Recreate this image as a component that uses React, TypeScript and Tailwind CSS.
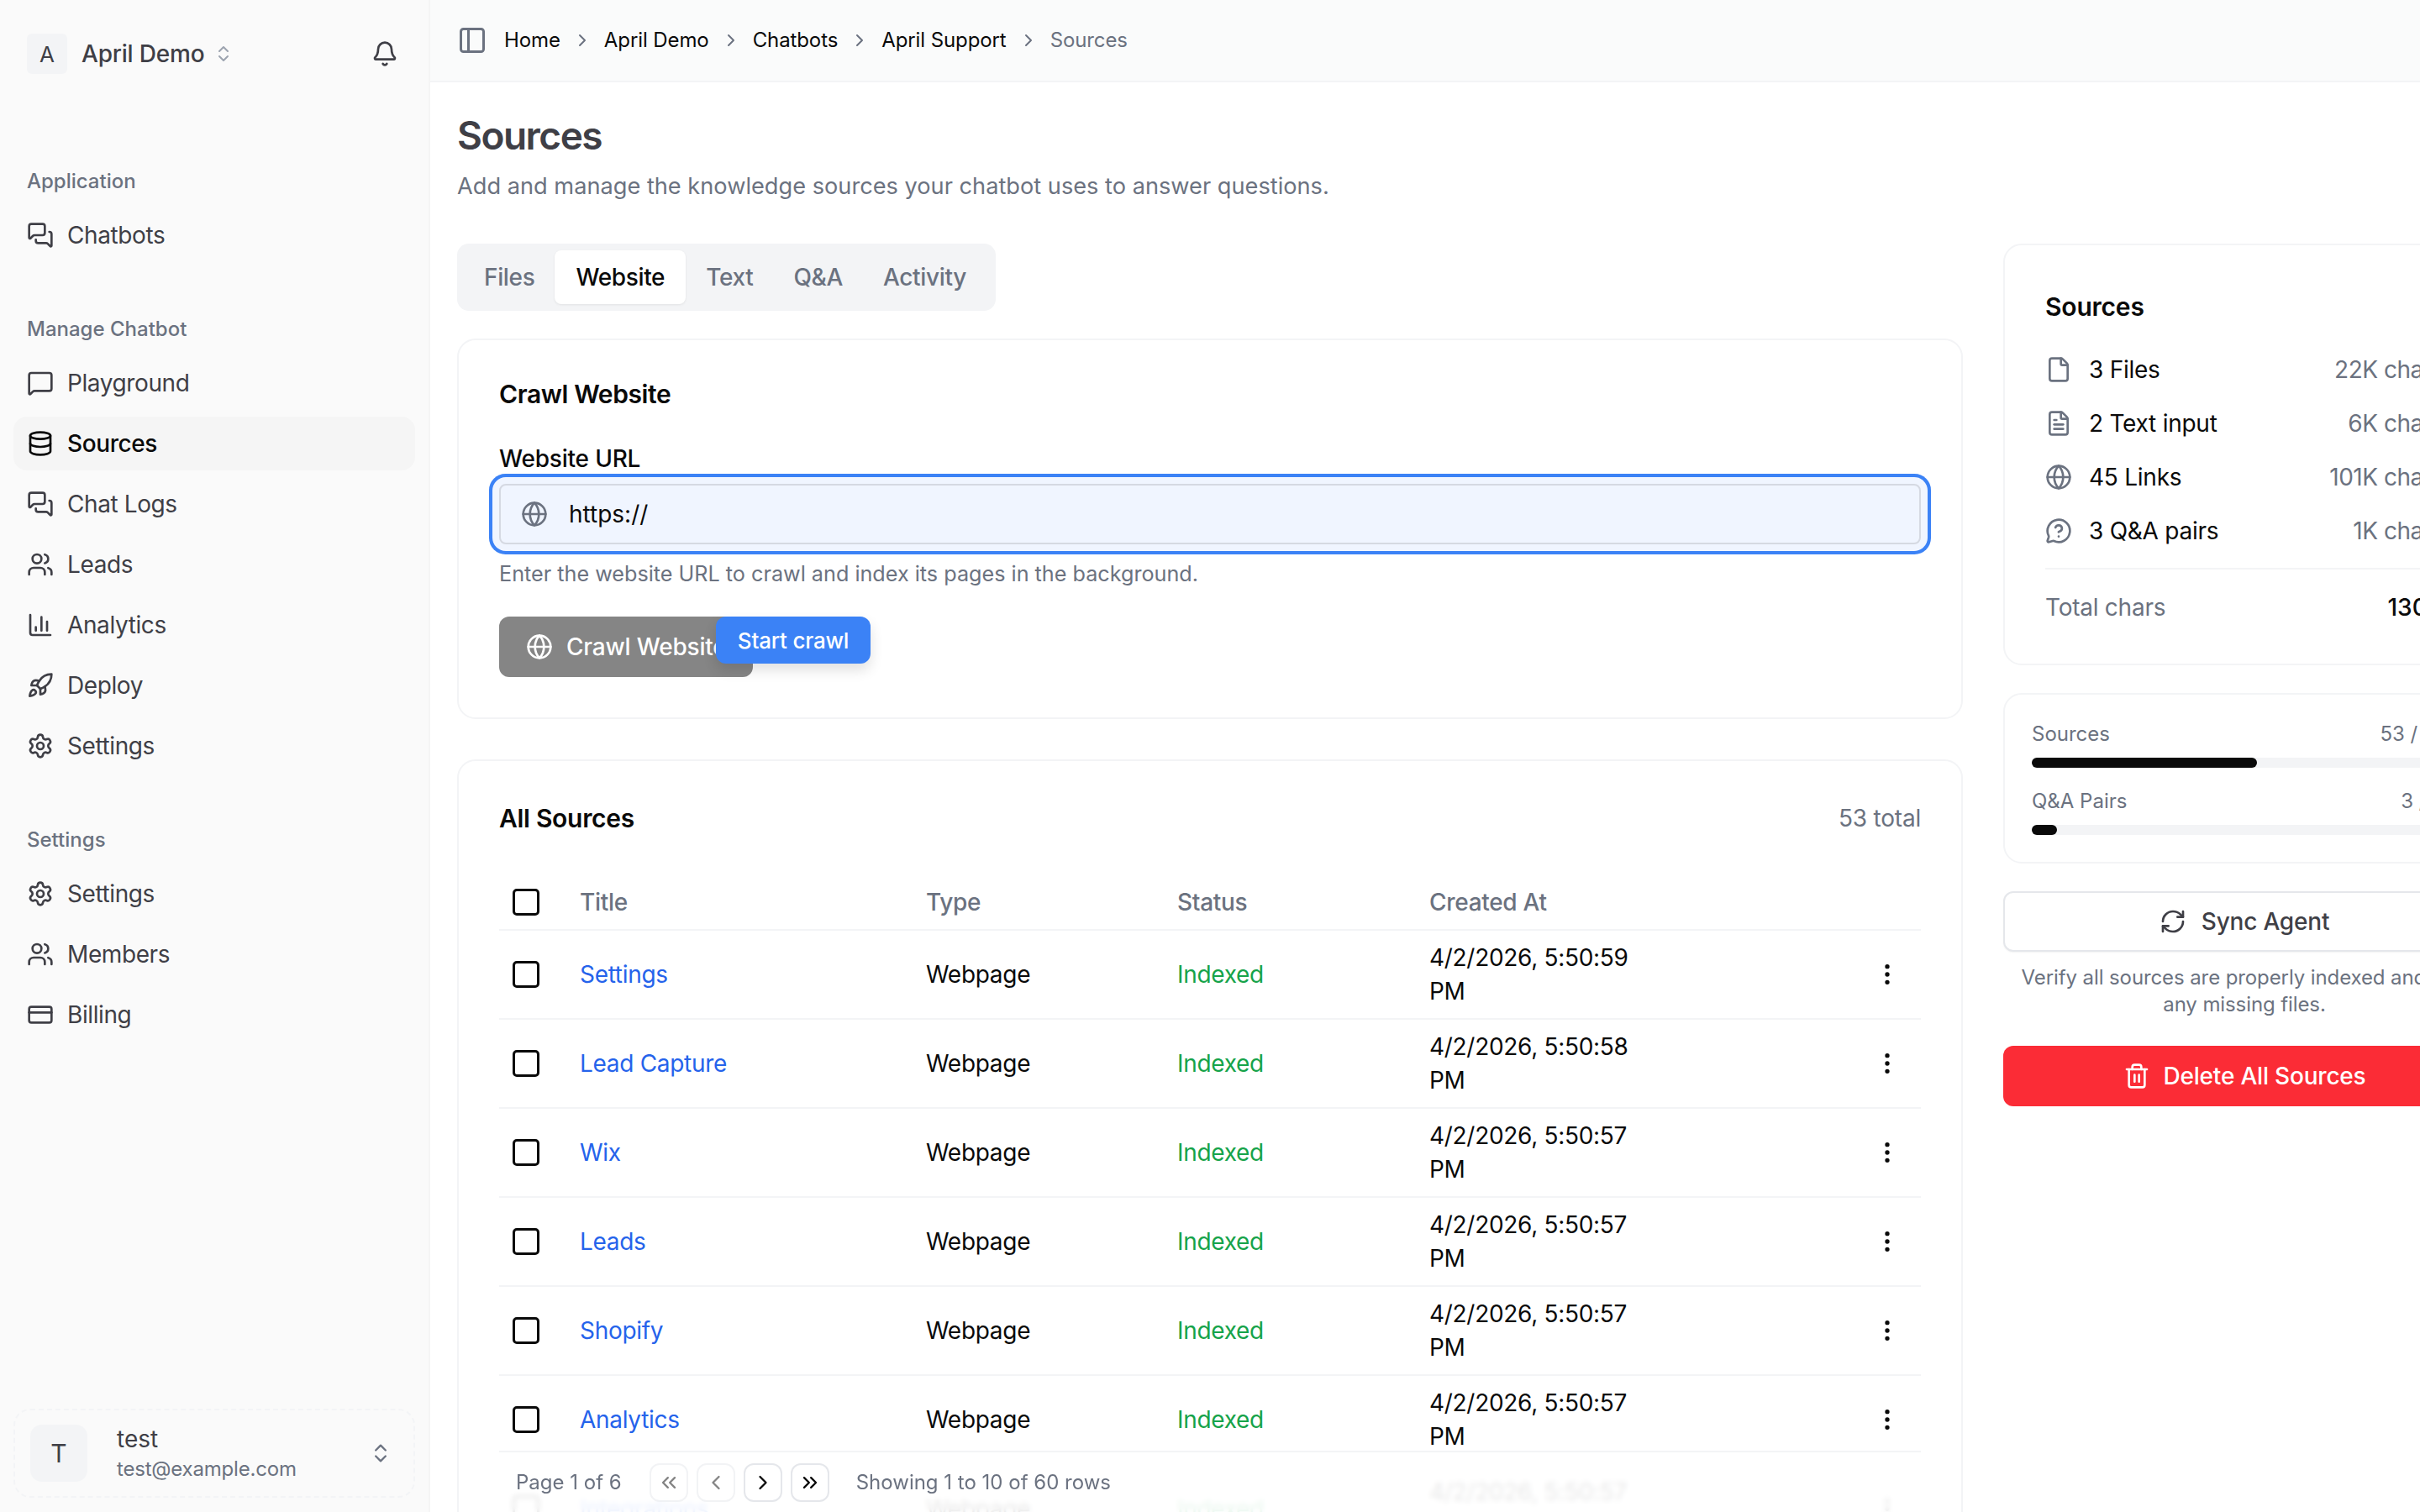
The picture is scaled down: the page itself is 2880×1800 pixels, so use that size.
import React from "react";
import {
  Bell, ChevronsUpDown, MessagesSquare, MessageSquare, Database, Users, ChartColumn, Rocket, Settings,
  CreditCard, PanelLeft, ChevronRight, ChevronLeft, ChevronsLeft, ChevronsRight, Globe, File, FileText,
  MessageCircleQuestionMark, RefreshCw, Trash2, EllipsisVertical,
} from "lucide-react";

const NavRow = ({ icon: Icon, label, active }: { icon: any; label: string; active?: boolean }) => (
  <div className={`flex h-16 items-center gap-4 rounded-[16px] px-4 text-[28px] tracking-[-0.4px] ${active ? "bg-[#f5f5f5] font-medium text-[#0a0a0a]" : "text-[#3f3f46]"}`}>
    <Icon size={32} strokeWidth={2} className="shrink-0" />
    <span>{label}</span>
  </div>
);

const Group = ({ title, children }: { title: string; children: React.ReactNode }) => (
  <div className="mb-12">
    <div className="flex h-16 items-center px-4 text-[24px] font-medium text-[#6b7280]">{title}</div>
    <div className="flex flex-col gap-2">{children}</div>
  </div>
);

const rows = [
  ["Settings", "5:50:59"],
  ["Lead Capture", "5:50:58"],
  ["Wix", "5:50:57"],
  ["Leads", "5:50:57"],
  ["Shopify", "5:50:57"],
  ["Analytics", "5:50:57"],
  ["Integrations", "5:50:57"],
  ["Customers", "5:50:56"],
  ["Pricing", "5:50:56"],
  ["Overview", "5:50:56"],
];

const Check = () => <div className="h-8 w-8 rounded-[5px] border-[3px] border-[#0a0a0a] bg-white" />;

const SourceStat = ({ icon: Icon, label, value }: { icon: any; label: string; value: string }) => (
  <div className="flex h-16 items-center justify-between">
    <div className="flex items-center gap-5 text-[#0a0a0a]">
      <Icon size={32} className="text-[#6b7280]" />
      <span className="tracking-[-0.25px]">{label}</span>
    </div>
    <span className="tracking-[-0.5px] text-[#6b7280]">{value}</span>
  </div>
);

const Crumb = ({ children }: { children: React.ReactNode }) => (
  <>
    <span className="tracking-[-0.1px] text-[#0a0a0a]">{children}</span>
    <ChevronRight size={24} strokeWidth={2} className="mx-[14px] text-[#6b7280]" />
  </>
);

const PageBtn = ({ icon: Icon, off }: { icon: any; off?: boolean }) => (
  <div className={`flex h-[46px] w-[46px] items-center justify-center rounded-[12px] border-2 border-[#e5e7eb] bg-white text-[#0a0a0a] ${off ? "opacity-50" : ""}`}>
    <Icon size={28} />
  </div>
);

export default function App() {
  return (
    <div className="flex h-[1800px] w-[2880px] overflow-hidden bg-white text-[#0a0a0a] [font-family:Inter,sans-serif]">
      <aside className="flex h-full w-[512px] shrink-0 flex-col border-r-2 border-[#f5f5f5] bg-[#fafafa]">
        <div className="mt-10 flex h-12 items-center justify-between px-8">
          <div className="flex items-center">
            <div className="flex h-12 w-12 items-center justify-center rounded-[6px] bg-[#f3f4f6] text-[26px] text-[#3f3f46]">A</div>
            <span className="ml-[17px] text-[28px] font-medium tracking-[-0.2px] text-[#3f3f46]">April Demo</span>
            <ChevronsUpDown size={24} className="ml-[11px] text-[#9ca3af]" />
          </div>
          <Bell size={32} className="mr-[4px] text-[#3f3f46]" />
        </div>
        <nav className="flex-1 px-4 pt-24">
          <Group title="Application">
            <NavRow icon={MessagesSquare} label="Chatbots" />
          </Group>
          <Group title="Manage Chatbot">
            <NavRow icon={MessageSquare} label="Playground" />
            <NavRow icon={Database} label="Sources" active />
            <NavRow icon={MessagesSquare} label="Chat Logs" />
            <NavRow icon={Users} label="Leads" />
            <NavRow icon={ChartColumn} label="Analytics" />
            <NavRow icon={Rocket} label="Deploy" />
            <NavRow icon={Settings} label="Settings" />
          </Group>
          <Group title="Settings">
            <NavRow icon={Settings} label="Settings" />
            <NavRow icon={Users} label="Members" />
            <NavRow icon={CreditCard} label="Billing" />
          </Group>
        </nav>
        <div className="mx-4 mb-[17px] flex h-[106px] items-center rounded-[20px] border-2 border-dashed border-[#f3f4f6] pl-[18px] pr-[25px]">
          <div className="flex h-[68px] w-[68px] items-center justify-center rounded-[14px] bg-[#f3f4f6] text-[30px] text-[#3f3f46]">T</div>
          <div className="ml-[35px] flex-1 leading-none">
            <div className="text-[28px] leading-[36px] text-[#3f3f46]">test</div>
            <div className="mt-[2px] text-[24px] leading-[32px] tracking-[-0.2px] text-[#6b7280]">test@example.com</div>
          </div>
          <ChevronsUpDown size={28} className="text-[#6b7280]" />
        </div>
      </aside>

      <div className="flex h-full min-w-0 flex-1 flex-col">
        <header className="flex h-[98px] shrink-0 items-center border-b-2 border-[#f3f4f6] bg-[#fafbfb] pl-[32px] text-[24px]">
          <PanelLeft size={36} className="mr-[20px] text-[#6b7280]" />
          <Crumb>Home</Crumb>
          <Crumb>April Demo</Crumb>
          <Crumb>Chatbots</Crumb>
          <Crumb>April Support</Crumb>
          <span className="tracking-[-0.1px] text-[#6b7280]">Sources</span>
        </header>
        <main className="min-h-0 flex-1 overflow-auto [scrollbar-width:none]">
          <div className="w-[2368px] pl-8">
            <h1 className="mt-[35px] h-14 text-[46px] font-semibold leading-[56px] tracking-[-1.5px] text-[#3f3f46]">Sources</h1>
            <p className="mt-[13px] text-[27.2px] leading-10 text-[#6b7280]">Add and manage the knowledge sources your chatbot uses to answer questions.</p>
            <div className="mt-[48px] flex items-start gap-12">
              <div className="w-[1792px] shrink-0">
                <div className="flex h-20 w-[641px] items-center rounded-[14px] bg-[#f3f4f6] p-2 text-[28px] font-medium tracking-[-0.35px] text-[#6b7280]">
                  <div className="px-6">Files</div>
                  <div className="flex h-16 items-center rounded-[8px] bg-white px-[25px] text-[#0a0a0a] shadow-[0_1px_3px_rgba(0,0,0,0.08)]">Website</div>
                  <div className="px-6">Text</div>
                  <div className="px-6">Q&amp;A</div>
                  <div className="px-6">Activity</div>
                </div>
                <section className="mt-[33px] h-[453px] rounded-[22px] border-2 border-[#f3f4f6] px-12">
                  <h2 className="mt-[44px] text-[30px] font-semibold leading-10 tracking-[-0.4px]">Crawl Website</h2>
                  <div className="mt-[38px] text-[28px] font-medium leading-[38px] tracking-[-0.2px]">Website URL</div>
                  <div className="mt-[11px] flex h-[72px] items-center rounded-[8px] border-2 border-[#d5d9e2] bg-[#f0f5ff] pl-6 text-[28px] shadow-[0_0_0_8px_#f0f5ff,0_0_0_12px_#3b82f6]">
                    <Globe size={32} className="text-[#6b7280]" />
                    <span className="ml-[25px]">https://</span>
                  </div>
                  <p className="mt-[17px] text-[25.2px] leading-9 text-[#6b7280]">Enter the website URL to crawl and index its pages in the background.</p>
                  <div className="relative mt-[33px] flex h-[72px] w-[302px] items-center rounded-[12px] bg-[#858585] pl-8 text-[28px] font-medium tracking-[-0.2px] text-white">
                    <Globe size={32} className="shrink-0" />
                    <span className="ml-[16px] whitespace-nowrap">Crawl Website</span>
                    <div className="absolute left-[258px] top-0 flex h-14 w-[184px] items-center justify-center rounded-[12px] bg-[#3b82f6] text-[26px] shadow-[0_8px_16px_rgba(0,0,0,0.12)]">Start crawl</div>
                  </div>
                </section>
                <section className="mt-12 rounded-[22px] border-2 border-[#f3f4f6] px-12">
                  <div className="mt-[48px] flex h-10 items-center justify-between">
                    <h2 className="text-[30px] font-semibold tracking-[-0.3px]">All Sources</h2>
                    <span className="text-[28px] tracking-[-0.2px] text-[#6b7280]">53 total</span>
                  </div>
                  <table className="mt-[47px] w-full table-fixed border-collapse text-left text-[28px] tracking-[-0.3px]">
                    <colgroup>
                      <col className="w-[96px]" />
                      <col className="w-[412px]" />
                      <col className="w-[299px]" />
                      <col className="w-[300px]" />
                      <col />
                      <col className="w-[86px]" />
                    </colgroup>
                    <thead>
                      <tr className="h-[66px] border-b-2 border-[#f3f4f6] text-[#6b7280]">
                        <th className="pl-4"><Check /></th>
                        <th className="font-medium">Title</th>
                        <th className="font-medium">Type</th>
                        <th className="font-medium">Status</th>
                        <th className="font-medium">Created At</th>
                        <th />
                      </tr>
                    </thead>
                    <tbody>
                      {rows.map(([t, d], i) => (
                        <tr key={i} className="h-[106px] border-b-2 border-[#f3f4f6]">
                          <td className="pl-4"><Check /></td>
                          <td className="text-[#2563eb]">{t}</td>
                          <td>Webpage</td>
                          <td className="text-[#16a34a]">Indexed</td>
                          <td className="leading-10"><div className="w-[260px]">4/2/2026, {d} PM</div></td>
                          <td><EllipsisVertical size={32} className="ml-[30px]" /></td>
                        </tr>
                      ))}
                    </tbody>
                  </table>
                  <div className="sticky bottom-0 flex h-[73px] items-center border-t-2 border-[#f3f4f6] bg-white/90 pl-5 text-[24px] text-[#6b7280] backdrop-blur-[3px]">
                    <span className="whitespace-nowrap">Page 1 of 6</span>
                    <div className="ml-[33px] flex gap-[10px]">
                      <PageBtn icon={ChevronsLeft} off />
                      <PageBtn icon={ChevronLeft} off />
                      <PageBtn icon={ChevronRight} />
                      <PageBtn icon={ChevronsRight} />
                    </div>
                    <span className="ml-8 whitespace-nowrap">Showing 1 to 10 of 60 rows</span>
                  </div>
                </section>
              </div>

              <aside className="w-[574px] shrink-0">
                <section className="h-[502px] rounded-[22px] border-2 border-[#f3f4f6] px-12 text-[28px]">
                  <h2 className="mt-[53px] text-[30px] font-semibold leading-10 tracking-[-0.2px]">Sources</h2>
                  <div className="mt-[23px]">
                    <SourceStat icon={File} label="3 Files" value="22K chars" />
                    <SourceStat icon={FileText} label="2 Text input" value="6K chars" />
                    <SourceStat icon={Globe} label="45 Links" value="101K chars" />
                    <SourceStat icon={MessageCircleQuestionMark} label="3 Q&A pairs" value="1K chars" />
                  </div>
                  <div className="mt-[12px] flex justify-between border-t-2 border-[#f3f4f6] pt-[25px] leading-10">
                    <span className="tracking-[-0.25px] text-[#6b7280]">Total chars</span>
                    <span className="font-medium">130K</span>
                  </div>
                </section>
                <section className="mt-[33px] h-[203px] rounded-[22px] border-2 border-[#f3f4f6] px-8 pt-[31px] text-[24px] text-[#6b7280]">
                  <div className="flex justify-between leading-8"><span>Sources</span><span>53 / 100</span></div>
                  <div className="mt-[12px] h-3 rounded-full bg-[#f3f4f6]"><div className="h-3 w-[53%] rounded-full bg-[#0a0a0a]" /></div>
                  <div className="mt-[24px] flex justify-between leading-8"><span>Q&amp;A Pairs</span><span>3 / 50</span></div>
                  <div className="mt-[12px] h-3 rounded-full bg-[#f3f4f6]"><div className="h-3 w-[6%] rounded-full bg-[#0a0a0a]" /></div>
                </section>
                <div className="mt-[33px] flex h-[72px] items-center justify-center gap-[18px] rounded-[12px] border-2 border-[#e5e7eb] bg-white text-[28px] font-medium tracking-[-0.2px] text-[#3f3f46] shadow-[0_1px_2px_rgba(0,0,0,0.05)]">
                  <RefreshCw size={32} />
                  <span>Sync Agent</span>
                </div>
                <p className="mt-[15px] text-center text-[24px] leading-8 tracking-[-0.1px] text-[#6b7280]">Verify all sources are properly indexed and add any missing files.</p>
                <div className="mt-[33px] flex h-[72px] items-center justify-center gap-[16px] rounded-[12px] bg-[#fb2c36] text-[28px] font-medium tracking-[-0.2px] text-white">
                  <Trash2 size={32} />
                  <span>Delete All Sources</span>
                </div>
              </aside>
            </div>
          </div>
        </main>
      </div>
    </div>
  );
}
